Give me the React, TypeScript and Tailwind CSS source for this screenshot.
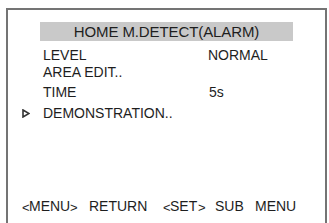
import React from "react";

const font = { fontFamily: '"Liberation Sans", Arial, sans-serif' };

function Arrow() {
  return (
    <svg width="8" height="9" viewBox="0 0 8 9" className="block">
      <path d="M1 1 L7 4.5 L1 8 Z" fill="none" stroke="#333" strokeWidth="1.6" strokeLinejoin="miter" />
    </svg>
  );
}

export default function App() {
  return (
    <div className="w-[329px] h-[223px] bg-white overflow-hidden text-[#1e1e1e]" style={font}>
      <div className="ml-[6px] mt-[8px] w-[321px] h-[215px] border-l-2 border-t-2 border-r-2 border-[#747474] flex flex-col">
        <div className="ml-[32px] mt-[12px] w-[253px] h-[19px] bg-[#c9c9c9] flex items-center justify-center text-[15px] leading-[19px] tracking-[-0.1px]">
          HOME M.DETECT(ALARM)
        </div>
        <div className="text-[14px] leading-[16px]">
          <div className="mt-[6px] h-[16px] flex">
            <span className="ml-[35px] w-[165px]">LEVEL</span>
            <span>NORMAL</span>
          </div>
          <div className="mt-[1px] h-[16px] flex">
            <span className="ml-[35px]">AREA EDIT..</span>
          </div>
          <div className="mt-[4px] h-[16px] flex">
            <span className="ml-[35px] w-[166px]">TIME</span>
            <span>5s</span>
          </div>
          <div className="mt-[5px] h-[16px] flex items-center">
            <span className="ml-[14px] w-[21px] flex items-center">
              <Arrow />
            </span>
            <span>DEMONSTRATION..</span>
          </div>
        </div>
        <div className="mt-auto mb-[9px] h-[16px] text-[14px] leading-[16px] flex items-center ml-[14px] whitespace-nowrap">
          <span className="w-[7px] text-[13px] translate-y-[2px] inline-block">&lt;</span>
          <span className="w-[41px] inline-block">MENU</span>
          <span className="w-[19px] text-[13px] translate-y-[2px] inline-block">&gt;</span>
          <span className="w-[74px] inline-block">RETURN</span>
          <span className="w-[7px] text-[13px] translate-y-[2px] inline-block">&lt;</span>
          <span className="w-[28px] inline-block">SET</span>
          <span className="w-[17px] text-[13px] translate-y-[2px] inline-block">&gt;</span>
          <span className="w-[40px] inline-block">SUB</span>
          <span className="inline-block">MENU</span>
        </div>
      </div>
    </div>
  );
}
